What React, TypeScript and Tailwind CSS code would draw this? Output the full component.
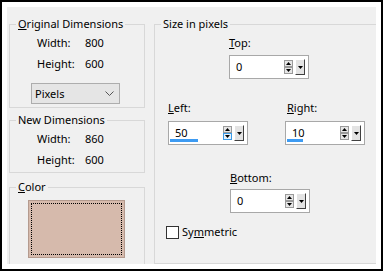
import React from "react";

function Spin({ value, bar, hover }: { value: string; bar?: number; hover?: boolean }) {
  return (
    <div className="relative w-[80px] h-[24px] border border-[#a8a8a8] bg-white flex items-center">
      <span className="ml-[6px] flex-1 leading-[16px]">{value}</span>
      <div className="flex flex-col mr-[2px]">
        <div className="w-[9px] h-[7px] border border-[#9a9a9a] bg-[#e6e6e6] flex items-center justify-center">
          <svg width="5" height="3" viewBox="0 0 5 3"><path d="M0 3 L2.5 0 L5 3 Z" fill="#000" /></svg>
        </div>
        <div className={"w-[9px] h-[7px] border flex items-center justify-center " + (hover ? "border-[#3c9ce8] bg-[#e5f1fb]" : "border-[#9a9a9a] bg-[#e6e6e6]")}>
          <svg width="5" height="3" viewBox="0 0 5 3"><path d="M0 0 L5 0 L2.5 3 Z" fill="#000" /></svg>
        </div>
      </div>
      <div className="w-[10px] h-[16px] mr-[3px] bg-[#e3e3e3] border-t border-l border-t-white border-l-white border-r border-b border-r-[#404040] border-b-[#404040] flex items-center justify-center">
        <svg width="5" height="3" viewBox="0 0 5 3"><path d="M0 0 L5 0 L2.5 3 Z" fill="#000" /></svg>
      </div>
      {bar ? <div className="absolute left-[1px] bottom-[2px] h-[3px] bg-[#3d9bf2]" style={{ width: bar }} /> : null}
    </div>
  );
}

function Row({ label, value }: { label: string; value: string }) {
  return (
    <div className="flex h-[16px] leading-[16px]">
      <span className="w-[48px]">{label}</span>
      <span>{value}</span>
    </div>
  );
}

export default function App() {
  return (
    <div className="w-[383px] h-[271px] border-2 border-black bg-white p-[5px] font-['Noto_Sans',sans-serif] text-[11px] text-black">
      <div className="h-full bg-[#f0f0f0] flex gap-[9px] pl-[2px] overflow-hidden">
        <div className="w-[136px] shrink-0 flex flex-col">
          <fieldset className="mt-[9px] border border-[#d8d8d8] pl-[27px] pb-[3px] min-w-0">
            <legend className="ml-[-21px] px-[2px] leading-[16px] h-[16px] whitespace-nowrap"><u>O</u>riginal Dimensions</legend>
            <div className="mt-[3px] flex flex-col gap-[5px]">
              <Row label="Width:" value="800" />
              <Row label="Height:" value="600" />
            </div>
            <div className="mt-[11px] -ml-[6px] w-[89px] h-[21px] border border-[#adadad] bg-[#e5e5e5] flex items-center pl-[3px] pr-[5px] justify-between">
              <span className="leading-[16px]">Pixels</span>
              <svg width="9" height="6" viewBox="0 0 9 6"><path d="M0.5 0.5 L4.5 4.5 L8.5 0.5" fill="none" stroke="#555" strokeWidth="1" /></svg>
            </div>
          </fieldset>
          <fieldset className="mt-[4px] border border-[#d8d8d8] pl-[27px] pb-[4px] min-w-0">
            <legend className="ml-[-21px] px-[2px] leading-[16px] h-[16px] whitespace-nowrap">New Dimensions</legend>
            <div className="mt-[3px] flex flex-col gap-[5px]">
              <Row label="Width:" value="860" />
              <Row label="Height:" value="600" />
            </div>
          </fieldset>
          <fieldset className="mt-[6px] border border-[#d8d8d8] pl-[18px] pb-[20px] min-w-0">
            <legend className="ml-[-12px] px-[2px] leading-[16px] h-[16px] whitespace-nowrap"><u>C</u>olor</legend>
            <div className="mt-[5px] w-[97px] h-[58px] bg-[#d6baac] border border-[#b49a8e] p-[2px]">
              <div className="w-full h-full border border-dotted border-black" />
            </div>
          </fieldset>
        </div>
        <fieldset className="w-[226px] shrink-0 mt-[9px] border border-[#d8d8d8] pb-[40px] min-w-0">
          <legend className="ml-[6px] px-[2px] leading-[16px] h-[16px] whitespace-nowrap">Size in pixels</legend>
          <div className="ml-[74px] mt-[3px] flex flex-col gap-[4px]">
            <span className="leading-[16px] h-[16px]"><u>T</u>op:</span>
            <Spin value="0" />
          </div>
          <div className="mt-[21px] ml-[13px] flex gap-[37px]">
            <div className="flex flex-col gap-[5px]">
              <span className="leading-[16px] h-[16px]"><u>L</u>eft:</span>
              <Spin value="50" bar={28} hover />
            </div>
            <div className="flex flex-col gap-[5px]">
              <span className="leading-[16px] h-[16px] ml-[2px]"><u>R</u>ight:</span>
              <Spin value="10" bar={16} />
            </div>
          </div>
          <div className="ml-[75px] mt-[25px] flex flex-col gap-[3px]">
            <span className="leading-[16px] h-[16px]"><u>B</u>ottom:</span>
            <Spin value="0" />
          </div>
          <div className="ml-[11px] mt-[11px] flex items-center gap-[3px]">
            <div className="w-[13px] h-[13px] border border-[#333] bg-white" />
            <span className="leading-[16px]">Sy<u>m</u>metric</span>
          </div>
        </fieldset>
      </div>
    </div>
  );
}
